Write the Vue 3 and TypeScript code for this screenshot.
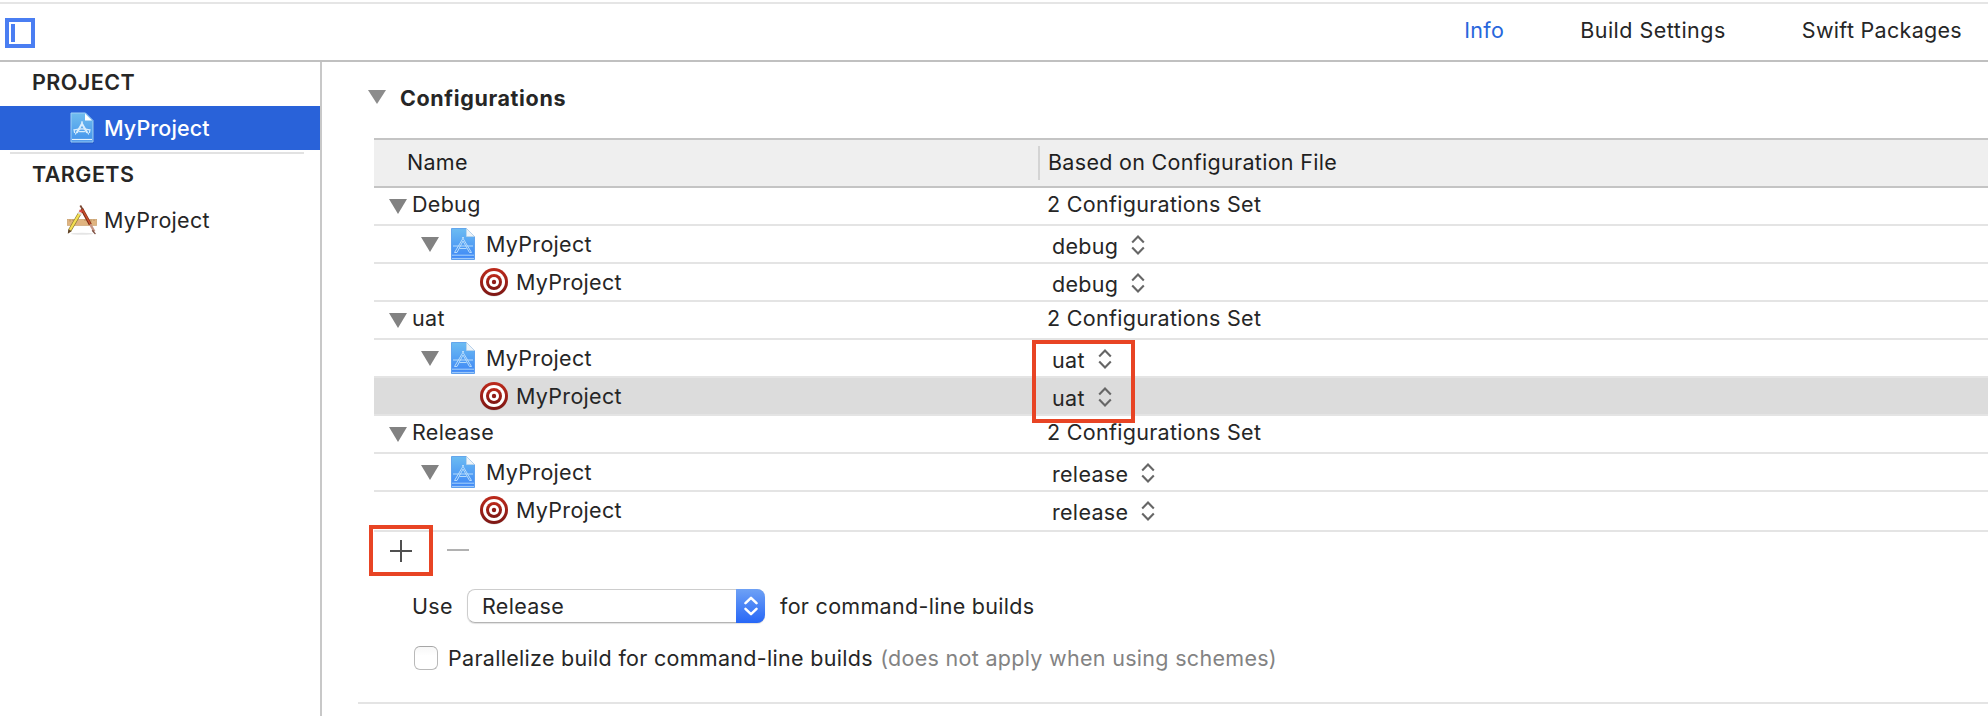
<script setup lang="ts">
import { ref } from 'vue'

type RowKind = 'group' | 'project' | 'target'
interface Row {
  kind: RowKind
  name: string
  value: string
  selected?: boolean
}

const tabs = ['Info', 'Build Settings', 'Swift Packages']
const activeTab = ref('Info')
const parallelize = ref(false)

const rows: Row[] = [
  { kind: 'group', name: 'Debug', value: '2 Configurations Set' },
  { kind: 'project', name: 'MyProject', value: 'debug' },
  { kind: 'target', name: 'MyProject', value: 'debug' },
  { kind: 'group', name: 'uat', value: '2 Configurations Set' },
  { kind: 'project', name: 'MyProject', value: 'uat' },
  { kind: 'target', name: 'MyProject', value: 'uat', selected: true },
  { kind: 'group', name: 'Release', value: '2 Configurations Set' },
  { kind: 'project', name: 'MyProject', value: 'release' },
  { kind: 'target', name: 'MyProject', value: 'release' },
]
</script>

<template>
  <div class="window">
    <svg class="defs" width="0" height="0" aria-hidden="true">
      <defs>
        <linearGradient id="docFill" x1="0" y1="0" x2="0" y2="1">
          <stop offset="0" stop-color="#6cbcf2" />
          <stop offset="1" stop-color="#3d86f6" />
        </linearGradient>
        <linearGradient id="sideDocFill" x1="0" y1="0" x2="0" y2="1">
          <stop offset="0" stop-color="#70bdee" />
          <stop offset="1" stop-color="#4393ec" />
        </linearGradient>
        <linearGradient id="targetFill" x1="0" y1="0" x2="0" y2="1">
          <stop offset="0" stop-color="#bd2a1c" />
          <stop offset="1" stop-color="#7d1714" />
        </linearGradient>
      </defs>
    </svg>

    <header class="toolbar">
      <svg class="panel-toggle" width="30" height="30" viewBox="0 0 30 30">
        <rect x="2" y="2" width="26" height="26" fill="none" stroke="#4a7ef2" stroke-width="4" />
        <rect x="6" y="6" width="4" height="18" fill="#4a7ef2" />
      </svg>
      <nav class="tabs">
        <a v-for="tab in tabs" :key="tab" class="tab" :class="{ active: tab === activeTab }" @click="activeTab = tab">{{ tab }}</a>
      </nav>
    </header>

    <div class="body">
      <aside class="sidebar">
        <h2 class="side-title">PROJECT</h2>
        <div class="side-item selected">
          <svg class="side-icon" width="30" height="34" viewBox="0 0 30 34">
            <path d="M4.5 2.5H19l7 7V31.5H4.5Z" fill="#1f4fae" opacity=".55" transform="translate(.6 .9)" />
            <path d="M4 2h14.5L26 9.500V31H4Z" fill="url(#sideDocFill)" stroke="#9fd0f6" stroke-width="1" />
            <path d="M18 2.500V9.500h7Z" fill="#fff" />
            <path d="M5 28.500h20" stroke="#e4f2fd" stroke-width="1.200" />
            <g fill="none" stroke="#d8edfd" stroke-width="1.200" stroke-linecap="round">
              <path d="M15.500 11 8.500 23M14.500 11 21.500 23M15 13.500l-4.500 8M15 13.500l4.500 8" />
              <path d="M7 18.500 7.500 21.500M23 18.500 22.500 21.500M7.500 18.800c5-1.300 10-1.300 15 0M12.500 20.600h5" />
            </g>
          </svg>
          <span class="side-label">MyProject</span>
        </div>
        <div class="side-rule"></div>
        <h2 class="side-title">TARGETS</h2>
        <div class="side-item">
          <svg class="side-icon" width="30" height="30" viewBox="0 0 30 30">
            <ellipse cx="15" cy="28.800" rx="11" ry="1" fill="#000" opacity=".1" />
            <rect x=".3" y="14.300" width="29.400" height="6.200" fill="#e0b480" stroke="#c99f6c" stroke-width=".6" />
            <path d="M3 14.500v2M6 14.500v1.500M18 14.500v1.500M24 14.500v2M27 14.500v1.500" stroke="#a37c4c" stroke-width=".7" />
            <path d="M13.300.500 16 5" stroke="#7d4a35" stroke-width="1.800" />
            <path d="M14.800 4 23.300 19.500" stroke="#7c2a16" stroke-width="3.200" />
            <path d="M15.300 4.300 23.200 18.800" stroke="#c9502c" stroke-width="1.500" />
            <path d="M23.300 19.300l4 7.200" stroke="#c49484" stroke-width="2.400" />
            <path d="M26 24.800l3 4.200-1.300.300-3-3.500Z" fill="#7c5143" />
            <path d="M13 7.800 2.800 25.300" stroke="#8b7a30" stroke-width="3.600" />
            <path d="M12.800 8.200 3 25" stroke="#f5e052" stroke-width="2.300" />
            <path d="M14.300 5.300l-1 1.900" stroke="#dc4d49" stroke-width="3.300" />
            <path d="M13.200 7.400l-1 1.700" stroke="#dfe2e4" stroke-width="3.400" />
            <path d="M1.300 24.300.800 28.800l3.800-2.600Z" fill="#5e4023" />
          </svg>
          <span class="side-label">MyProject</span>
        </div>
      </aside>

      <main class="content">
        <div class="section-head">
          <svg width="18" height="14" viewBox="0 0 18 14"><path d="M0 0H18L9 14Z" fill="#8c8c8c" /></svg>
          <h1>Configurations</h1>
        </div>

        <section class="table">
          <div class="thead">
            <span class="th-name">Name</span>
            <span class="th-file">Based on Configuration File</span>
          </div>
          <div v-for="(row, i) in rows" :key="i" class="row" :class="[row.kind, { selected: row.selected }]">
            <div class="cell-name">
              <svg v-if="row.kind !== 'target'" class="triangle" width="18" height="15" viewBox="0 0 18 15">
                <path d="M0 0H18L9 15Z" fill="#828282" />
              </svg>
              <svg v-if="row.kind === 'project'" class="doc" width="24" height="32" viewBox="0 0 24 32">
                <path d="M.5.500H15.500L23.500 8.500V31.500H.5Z" fill="url(#docFill)" stroke="#4a93e8" stroke-opacity=".75" />
                <path d="M15.500.500V8.500H23.500Z" fill="#edf3f8" stroke="#c3d6e8" stroke-width=".6" />
                <path d="M1 27.200h22M1 30.400h22" stroke="#a9d2fb" stroke-width="1" />
                <g fill="none" stroke="#b5dbfc" stroke-width="1">
                  <path d="M12.800 9 3.500 24.500M11.200 9l9.300 15.500M12 13 6 24.500M12 13l6.500 11.500M2 18h20M8.500 20.500h7M3.500 24.500H6M18.500 24.500h2" />
                </g>
              </svg>
              <svg v-if="row.kind === 'target'" class="bullseye" width="30" height="30" viewBox="0 0 30 30">
                <circle cx="15" cy="15.800" r="13.800" fill="#000" opacity=".14" />
                <circle cx="15" cy="15" r="14" fill="url(#targetFill)" />
                <circle cx="15" cy="15" r="11" fill="#fff" />
                <circle cx="15" cy="15" r="8" fill="url(#targetFill)" />
                <circle cx="15" cy="15" r="5" fill="#fff" />
                <circle cx="15" cy="15" r="2.200" fill="#8f1b17" />
              </svg>
              <span class="name">{{ row.name }}</span>
            </div>
            <div class="cell-file">
              <span class="value">{{ row.value }}</span>
              <svg v-if="row.kind !== 'group'" class="stepper" width="14" height="20" viewBox="0 0 14 20">
                <path d="M1.200 7.500 7 1.500l5.800 6M1.200 12.500 7 18.500l5.800-6" fill="none" stroke="#666" stroke-width="2.100" />
              </svg>
            </div>
          </div>
          <div class="highlight values-highlight"></div>
        </section>

        <div class="table-actions">
          <button class="add" aria-label="Add configuration">
            <svg width="22" height="22" viewBox="0 0 22 22"><path d="M11 0V22M0 11H22" stroke="#505050" stroke-width="2" /></svg>
            <i class="highlight add-highlight"></i>
          </button>
          <button class="remove" aria-label="Remove configuration">
            <svg width="22" height="2" viewBox="0 0 22 2"><path d="M0 1H22" stroke="#b1b1b1" stroke-width="2" /></svg>
          </button>
        </div>

        <div class="use-row">
          <span class="use">Use</span>
          <div class="select">
            <span class="select-value">Release</span>
            <span class="select-button">
              <svg width="14" height="20" viewBox="0 0 14 20">
                <path d="M1.500 7.200 7 1.800l5.500 5.400M1.500 12.800 7 18.200l5.500-5.400" fill="none" stroke="#fff" stroke-width="2.500" stroke-linecap="round" stroke-linejoin="round" />
              </svg>
            </span>
          </div>
          <span>for command-line builds</span>
        </div>

        <label class="parallel-row">
          <input v-model="parallelize" type="checkbox" class="checkbox" />
          <span>Parallelize build for command-line builds <span class="hint">(does not apply when using schemes)</span></span>
        </label>

        <div class="section-rule"></div>
      </main>
    </div>
  </div>
</template>

<style>
body {
  margin: 0;
  background: #fff;
}
</style>

<style scoped>
.window {
  display: flex;
  flex-direction: column;
  width: 1988px;
  height: 716px;
  box-sizing: border-box;
  padding-top: 2px;
  overflow: hidden;
  background: #fff;
  color: #262626;
  font-family: Inter, "Liberation Sans", sans-serif;
  font-size: 21.5px;
  line-height: 36px;
  letter-spacing: 0.3px;
  white-space: nowrap;
}
.defs {
  position: absolute;
}
svg {
  display: block;
  flex: none;
}
h1,
h2 {
  margin: 0;
  font-size: inherit;
}

.toolbar {
  display: flex;
  flex: none;
  justify-content: space-between;
  align-items: flex-start;
  box-sizing: border-box;
  height: 60px;
  padding: 0 26px 0 5px;
  border-top: 2px solid #e5e5e5;
  border-bottom: 2px solid #c0c0c0;
}
.panel-toggle {
  margin-top: 14px;
}
.tabs {
  display: flex;
  gap: 76px;
  padding-top: 8px;
}
.tab {
  cursor: default;
}
.tab:nth-child(2) {
  letter-spacing: 0.5px;
}
.tab.active {
  color: #2867dc;
}

.body {
  display: flex;
  flex: 1;
}
.sidebar {
  flex: none;
  width: 320px;
  border-right: 2px solid #c8c8c8;
}
.side-title {
  height: 40px;
  padding: 2px 0 2px 32px;
  font-weight: 600;
  letter-spacing: 0.45px;
}
.side-item {
  display: flex;
  align-items: center;
  height: 44px;
  padding-left: 67px;
  gap: 7px;
}
.side-item.selected {
  background: #2962d9;
  color: #fff;
}
.side-item.selected .side-label {
  font-weight: 500;
  letter-spacing: 0.1px;
}
.side-rule {
  height: 2px;
  margin: 2px 16px 0 10px;
  background: #e2e2e2;
}

.content {
  flex: 1;
  min-width: 0;
  padding-left: 36px;
}
.section-head {
  display: flex;
  align-items: center;
  gap: 14px;
  height: 70px;
  padding: 0 0 6px 10px;
  box-sizing: content-box;
}
.section-head h1 {
  padding-top: 2px;
  font-weight: 700;
  letter-spacing: 0.63px;
}
.table {
  position: relative;
  margin-left: 16px;
}
.thead {
  display: flex;
  align-items: center;
  height: 46px;
  border-top: 2px solid #c4c4c4;
  border-bottom: 2px solid #c4c4c4;
  background: #efefef;
  color: #1f1f1f;
}
.th-name {
  width: 631px;
  padding: 0 0 2px 33px;
}
.th-file {
  height: 34px;
  padding-left: 8px;
  border-left: 2px solid #d4d4d4;
  line-height: 32px;
}
.row {
  display: flex;
  box-sizing: border-box;
  height: 38px;
  border-bottom: 2px solid #e4e4e4;
}
.row:nth-of-type(10) {
  height: 40px;
}
.row.selected {
  background: #dcdcdc;
}
.cell-name {
  display: flex;
  align-items: center;
  box-sizing: border-box;
  width: 672px;
  height: 36px;
  padding-left: 47px;
}
.cell-file {
  display: flex;
  align-items: center;
  height: 36px;
}
.group .cell-name {
  padding-left: 15px;
}
.group .name,
.group .value {
  padding-bottom: 4px;
}
.group .cell-file {
  padding-left: 1px;
}
.group .name {
  margin-left: 5px;
}
.project .doc {
  margin-left: 12px;
}
.project .name {
  margin-left: 11px;
}
.target .cell-name {
  padding-left: 105px;
}
.target .name {
  margin-left: 7px;
}
.project .cell-file,
.target .cell-file {
  gap: 13px;
  padding-left: 6px;
}
.project .value,
.target .value {
  padding-top: 4px;
}
.stepper {
  margin-top: 2px;
}

.highlight {
  position: absolute;
  box-sizing: border-box;
  border: 4px solid #e84424;
}
.values-highlight {
  left: 658px;
  top: 202px;
  width: 103px;
  height: 83px;
}
.table-actions {
  display: flex;
  gap: 35px;
  padding: 8px 0 0 32px;
}
.table-actions button {
  position: relative;
  width: 22px;
  height: 22px;
  padding: 0;
  border: 0;
  background: none;
}
.table-actions .remove {
  display: flex;
  align-items: center;
  padding-bottom: 2px;
}
.add-highlight {
  left: -21px;
  top: -15px;
  width: 64px;
  height: 51px;
}

.use-row {
  display: flex;
  align-items: center;
  height: 34px;
  margin-top: 27px;
  padding-left: 54px;
}
.use {
  width: 55px;
}
.select {
  display: flex;
  justify-content: space-between;
  box-sizing: border-box;
  width: 298px;
  height: 34px;
  margin-right: 15px;
  border: 1px solid #cdcdcd;
  border-bottom-color: #b4b4b4;
  border-right: 0;
  border-radius: 8px;
  box-shadow: 0 1px 1px rgba(0, 0, 0, 0.12);
  line-height: 33px;
}
.select-value {
  padding-left: 14px;
}
.select-button {
  display: flex;
  align-items: center;
  justify-content: center;
  width: 29px;
  height: 34px;
  margin-top: -1px;
  border-radius: 0 8px 8px 0;
  background: linear-gradient(#6ea1f5, #2767f7);
}
.parallel-row {
  display: flex;
  align-items: center;
  height: 36px;
  margin-top: 17px;
  padding-left: 56px;
}
.checkbox {
  appearance: none;
  box-sizing: border-box;
  width: 24px;
  height: 24px;
  margin: 0 10px 0 0;
  border: 1.500px solid #b9b9b9;
  border-top-color: #a6a6a6;
  border-radius: 6px;
  background: linear-gradient(#f7f7f7, #fff 40%);
}
.hint {
  margin-left: 1px;
  color: #838383;
}
.section-rule {
  height: 2px;
  margin-top: 26px;
  background: #e4e4e4;
}
</style>
